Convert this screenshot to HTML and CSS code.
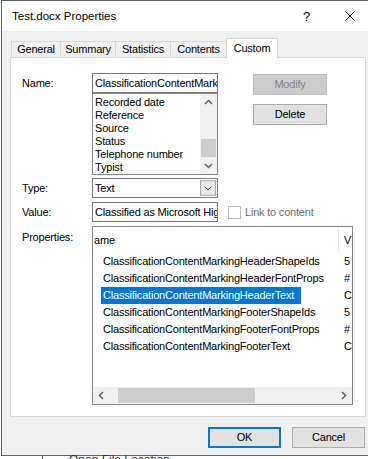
FILE: index.html
```html
<!DOCTYPE html>
<html lang="en">
<head>
    <meta charset="UTF-8">
    <meta name="viewport" content="width=device-width, initial-scale=1.0">
    <title>Test.docx Properties</title>
    <link rel="stylesheet" href="styles.css">
</head>
<body>

    <div class="window">
        <div class="titlebar">
            <span class="title">Test.docx Properties</span>
            <span class="help">?</span>
            <span class="close">
                <svg width="10" height="10" viewBox="0 0 10 10"><path d="M0.5 0.5 L9.5 9.5 M9.5 0.5 L0.5 9.5" stroke="#000" stroke-width="1" fill="none"/></svg>
            </span>
        </div>

        <div class="client">
            <div class="tabs">
                <div class="tab tab-general">General</div>
                <div class="tab tab-summary">Summary</div>
                <div class="tab tab-statistics">Statistics</div>
                <div class="tab tab-contents">Contents</div>
                <div class="tab tab-custom active">Custom</div>
            </div>

            <div class="panel">
                <!-- Name + list of preset names -->
                <div class="row">
                    <label class="label">Name:</label>
                    <div class="stack">
                        <div class="textbox">ClassificationContentMarking</div>
                        <div class="listbox">
                            <ul class="items">
                                <li>Recorded date</li>
                                <li>Reference</li>
                                <li>Source</li>
                                <li>Status</li>
                                <li>Telephone number</li>
                                <li>Typist</li>
                            </ul>
                            <div class="vscroll">
                                <div class="arrow">
                                    <svg width="17" height="17" viewBox="0 0 17 17"><path d="M5 10 L8.5 6.5 L12 10" stroke="#606060" stroke-width="1.5" fill="none"/></svg>
                                </div>
                                <div class="vtrack"><div class="vthumb"></div></div>
                                <div class="arrow">
                                    <svg width="17" height="17" viewBox="0 0 17 17"><path d="M5 7 L8.5 10.5 L12 7" stroke="#606060" stroke-width="1.5" fill="none"/></svg>
                                </div>
                            </div>
                        </div>
                    </div>
                    <div class="side-buttons">
                        <button class="btn btn-modify" disabled>Modify</button>
                        <button class="btn btn-delete">Delete</button>
                    </div>
                </div>

                <div class="row row-type">
                    <label class="label">Type:</label>
                    <div class="combo">
                        <span class="combo-text">Text</span>
                        <span class="drop">
                            <svg width="14" height="14" viewBox="0 0 14 14"><path d="M3.5 5.5 L7 9 L10.5 5.5" stroke="#505050" stroke-width="1" fill="none"/></svg>
                        </span>
                    </div>
                </div>

                <div class="row row-value">
                    <label class="label">Value:</label>
                    <div class="textbox value-box">Classified as Microsoft High</div>
                    <span class="checkbox"></span>
                    <span class="check-label">Link to content</span>
                </div>

                <div class="row row-props">
                    <label class="label label-top">Properties:</label>
                    <div class="listview">
                        <div class="lv-header">
                            <div class="col-name">ame</div>
                            <div class="col-val">V</div>
                        </div>
                        <div class="lv-body">
                            <div class="lv-row"><div class="col-name"><span>ClassificationContentMarkingHeaderShapeIds</span></div><div class="col-val">5</div></div>
                            <div class="lv-row"><div class="col-name"><span>ClassificationContentMarkingHeaderFontProps</span></div><div class="col-val">#</div></div>
                            <div class="lv-row selected"><div class="col-name"><span>ClassificationContentMarkingHeaderText</span></div><div class="col-val">C</div></div>
                            <div class="lv-row"><div class="col-name"><span>ClassificationContentMarkingFooterShapeIds</span></div><div class="col-val">5</div></div>
                            <div class="lv-row"><div class="col-name"><span>ClassificationContentMarkingFooterFontProps</span></div><div class="col-val">#</div></div>
                            <div class="lv-row"><div class="col-name"><span>ClassificationContentMarkingFooterText</span></div><div class="col-val">C</div></div>
                        </div>
                        <div class="hscroll">
                            <div class="harrow">
                                <svg width="17" height="17" viewBox="0 0 17 17"><path d="M10 5 L6.5 8.5 L10 12" stroke="#606060" stroke-width="1.5" fill="none"/></svg>
                            </div>
                            <div class="htrack"><div class="hthumb"></div></div>
                            <div class="harrow">
                                <svg width="17" height="17" viewBox="0 0 17 17"><path d="M7 5 L10.5 8.5 L7 12" stroke="#606060" stroke-width="1.5" fill="none"/></svg>
                            </div>
                        </div>
                    </div>
                </div>
            </div>

            <div class="footer">
                <button class="btn btn-ok">OK</button>
                <button class="btn btn-cancel">Cancel</button>
            </div>
        </div>
    </div>

    <div class="behind">
        <span class="behind-line"></span>
        <span class="behind-text">Open File Location</span>
    </div>

</body>
</html>
```

FILE: styles.css
```css
* {
    box-sizing: border-box;
}
html, body {
    margin: 0;
    padding: 0;
}
body {
    width: 368px;
    height: 459px;
    overflow: hidden;
    background-color: #fff;
    font-family: "Liberation Sans", Arial, sans-serif;
    font-size: 11px;
    letter-spacing: -0.2px;
    color: #000;
}
.window {
    width: 374px;
    margin-left: 1px;
    border: 1px solid #646464;
    background-color: #f0f0f0;
}
.titlebar {
    height: 30px;
    background-color: #fff;
    display: flex;
    align-items: center;
    padding: 0 19px 0 10px;
}
.title {
    font-size: 11.5px;
    letter-spacing: 0;
}
.help {
    margin-left: auto;
    width: 8px;
    font-size: 13px;
    letter-spacing: 0;
}
.close {
    width: 10px;
    height: 10px;
    margin-left: 34px;
    display: flex;
}
.client {
    padding: 7px 8px 7px 8px;
}
.tabs {
    display: flex;
    align-items: flex-end;
    height: 19px;
    padding-left: 1px;
}
.tab {
    height: 16px;
    border: 1px solid #d9d9d9;
    border-bottom: none;
    margin-left: -1px;
    background-color: #f0f0f0;
    text-align: center;
    line-height: 14px;
}
.tab-general { width: 50px; margin-left: 0; }
.tab-summary { width: 56px; }
.tab-statistics { width: 56px; }
.tab-contents { width: 57px; }
.tab-custom { width: 52px; }
.tab.active {
    height: 20px;
    margin-bottom: -1px;
    padding-top: 1px;
    line-height: 16px;
    background-color: #fff;
    position: relative;
    z-index: 1;
}
.panel {
    width: 356px;
    border: 1px solid #d9d9d9;
    background-color: #fff;
    padding: 15px 12px 11px 11px;
}
.row {
    display: flex;
    align-items: flex-start;
}
.label {
    width: 70px;
    flex: none;
    line-height: 20px;
}
.label-top {
    line-height: 14px;
    padding-top: 4px;
}
.stack {
    width: 126px;
    display: flex;
    flex-direction: column;
}
.textbox {
    width: 126px;
    height: 20px;
    border: 1px solid #7a7a7a;
    padding: 0 2px;
    line-height: 18px;
    white-space: nowrap;
    overflow: hidden;
    background-color: #fff;
}
.listbox {
    height: 82px;
    border: 1px solid #828790;
    display: flex;
}
.items {
    flex: 1;
    margin: 0;
    padding: 2px 0 0 2px;
    list-style: none;
    line-height: 13px;
    overflow: hidden;
    white-space: nowrap;
}
.vscroll {
    width: 17px;
    background-color: #f0f0f0;
    display: flex;
    flex-direction: column;
}
.arrow {
    height: 17px;
    display: flex;
}
.vtrack {
    flex: 1;
    display: flex;
    flex-direction: column;
    justify-content: flex-end;
    padding: 0 1px;
}
.vthumb {
    height: 18px;
    background-color: #cdcdcd;
}
.side-buttons {
    margin-left: 35px;
    display: flex;
    flex-direction: column;
}
.btn {
    font-family: inherit;
    font-size: 11px;
    letter-spacing: -0.2px;
    color: #000;
    height: 21px;
    width: 74px;
    padding: 0;
    border: 1px solid #adadad;
    background-color: #e1e1e1;
    line-height: 19px;
    text-align: center;
}
.btn-modify {
    margin-top: 1px;
    background-color: #cccccc;
    border-color: #bfbfbf;
    color: #838383;
}
.btn-delete {
    margin-top: 9px;
}
.row-type {
    margin-top: 3px;
}
.combo {
    width: 126px;
    height: 20px;
    border: 1px solid #7a7a7a;
    display: flex;
    background-color: #fff;
}
.combo-text {
    flex: 1;
    padding-left: 2px;
    line-height: 18px;
}
.drop {
    width: 16px;
    height: 16px;
    margin: 1px 1px 0 0;
    border: 1px solid #adadad;
    background-color: #e5e5e5;
    display: flex;
    align-items: center;
    justify-content: center;
}
.row-value {
    margin-top: 4px;
}
.checkbox {
    width: 13px;
    height: 13px;
    margin: 4px 0 0 10px;
    border: 1px solid #bcbcbc;
    background-color: #fff;
    flex: none;
}
.check-label {
    margin-left: 4px;
    line-height: 20px;
    color: #6d6d6d;
}
.row-props {
    margin-top: 4px;
}
.listview {
    width: 261px;
    height: 179px;
    border: 1px solid #828790;
    display: flex;
    flex-direction: column;
    overflow: hidden;
}
.lv-header {
    height: 26px;
    display: flex;
    line-height: 26px;
    flex: none;
}
.lv-header .col-name {
    border-right: 1px solid #e5e5e5;
    padding-left: 1px;
}
.col-name {
    width: 246px;
    flex: none;
    white-space: nowrap;
    overflow: hidden;
}
.col-val {
    padding-left: 5px;
    white-space: nowrap;
}
.lv-body {
    flex: 1;
}
.lv-row {
    display: flex;
    height: 17px;
    line-height: 17px;
}
.lv-row .col-name {
    padding-left: 8px;
}
.lv-row .col-name span {
    display: inline-block;
    padding: 0 7px 0 2px;
}
.lv-row.selected .col-name span {
    background-color: #0078d7;
    color: #fff;
}
.hscroll {
    height: 17px;
    flex: none;
    display: flex;
    background-color: #f0f0f0;
}
.harrow {
    width: 17px;
    display: flex;
}
.htrack {
    flex: 1;
    padding: 1px 0;
}
.hthumb {
    margin-left: 8px;
    width: 137px;
    height: 100%;
    background-color: #cdcdcd;
}
.footer {
    display: flex;
    justify-content: flex-end;
    margin-top: 10px;
    padding-right: 1px;
}
.btn-ok {
    width: 73px;
    border: 2px solid #0078d7;
    line-height: 17px;
}
.btn-cancel {
    width: 73px;
    margin-left: 11px;
}
.behind {
    display: flex;
    height: 3px;
}
.behind-line {
    width: 1px;
    height: 3px;
    margin-left: 42px;
    background-color: #555;
}
.behind-text {
    margin-left: 26px;
    font-size: 12px;
    line-height: 8px;
    letter-spacing: 0;
    color: #333;
}
```
